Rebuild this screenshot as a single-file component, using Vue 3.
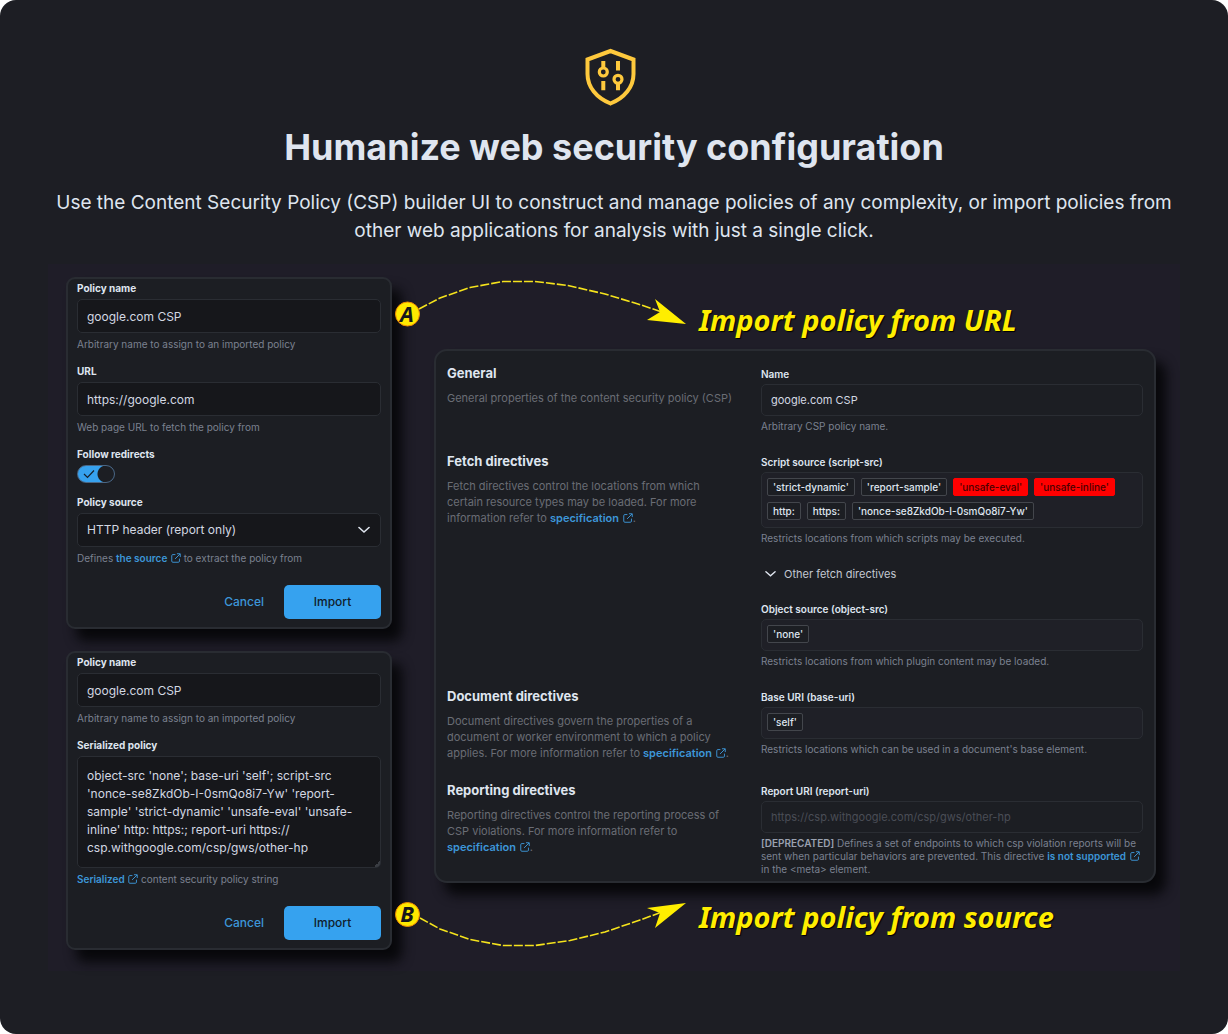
<script setup>
import { ref, h } from 'vue'

const importName = ref('google.com CSP')
const importUrl = ref('https://google.com')
const followRedirects = ref(true)
const sourceName = ref('google.com CSP')
const serialized = ref(
  "object-src 'none'; base-uri 'self'; script-src 'nonce-se8ZkdOb-I-0smQo8i7-Yw' 'report-sample' 'strict-dynamic' 'unsafe-eval' 'unsafe-inline' http: https:; report-uri https://\u200bcsp.withgoogle.com/csp/gws/other-hp"
)
const policyName = ref('google.com CSP')
const scriptSources = [
  { text: "'strict-dynamic'" },
  { text: "'report-sample'" },
  { text: "'unsafe-eval'", danger: true },
  { text: "'unsafe-inline'", danger: true },
  { text: 'http:' },
  { text: 'https:' },
  { text: "'nonce-se8ZkdOb-I-0smQo8i7-Yw'" }
]

const ExternalIcon = () =>
  h('svg', { viewBox: '0 0 16 16', width: 10, height: 10, fill: 'none', stroke: 'currentColor', 'stroke-width': 1.5, 'aria-hidden': 'true' }, [
    h('path', { d: 'M7 2.5H3A1.8 1.8 0 0 0 1.2 4.300V13A1.800 1.800 0 0 0 3 14.800h8.700A1.800 1.800 0 0 0 13.500 13V9M9.500 1.200h5.300v5.300M14.500 1.500 6.500 9.500' })
  ])
</script>

<template>
  <main class="hero">
    <svg class="logo" viewBox="0 0 58 58" aria-hidden="true">
      <g fill="none" stroke="#fec93d" stroke-width="4">
        <path d="M25.500 3 48.500 11.500V26C48.500 39 39.500 50 25.500 55.500 11.500 50 2.500 39 2.500 26V11.500Z" />
        <circle cx="18.300" cy="24" r="4" stroke-width="3.200" />
        <circle cx="33" cy="31.300" r="4" stroke-width="3.200" />
        <path d="M18.300 13v6.500M18.300 33v9.300M33 13v9.600M33 36v6.300" />
      </g>
    </svg>
    <h1>Humanize web security configuration</h1>
    <p class="lead">
      Use the Content Security Policy (CSP) builder UI to construct and manage policies of any complexity, or import policies from other web applications for analysis with just a single click.
    </p>

    <section class="stage">
      <div class="imports">
        <form class="panel" @submit.prevent>
          <div class="field">
            <label for="import-name">Policy name</label>
            <input id="import-name" v-model="importName" class="control" type="text" />
            <p class="help">Arbitrary name to assign to an imported policy</p>
          </div>
          <div class="field">
            <label for="import-url">URL</label>
            <input id="import-url" v-model="importUrl" class="control" type="text" />
            <p class="help">Web page URL to fetch the policy from</p>
          </div>
          <div class="field">
            <label for="import-follow">Follow redirects</label>
            <div class="switch">
              <input id="import-follow" v-model="followRedirects" type="checkbox" />
              <svg viewBox="0 0 12 10" aria-hidden="true"><path d="m1 5 3.500 3.500L11 1.500" fill="none" stroke="#16202c" stroke-width="1.200" /></svg>
            </div>
          </div>
          <div class="field">
            <label for="import-source">Policy source</label>
            <div class="select">
              <select id="import-source" class="control">
                <option>HTTP header (report only)</option>
              </select>
              <svg viewBox="0 0 12 8" aria-hidden="true"><path d="m1 1.500 5 4.500 5-4.500" fill="none" stroke="#dfe5ef" stroke-width="1.600" stroke-linecap="round" /></svg>
            </div>
            <p class="help">Defines <a href="#source">the source <ExternalIcon /></a> to extract the policy from</p>
          </div>
          <div class="actions">
            <button type="button" class="cancel">Cancel</button>
            <button type="submit" class="import">Import</button>
          </div>
        </form>

        <form class="panel" @submit.prevent>
          <div class="field">
            <label for="source-name">Policy name</label>
            <input id="source-name" v-model="sourceName" class="control" type="text" />
            <p class="help">Arbitrary name to assign to an imported policy</p>
          </div>
          <div class="field">
            <label for="source-policy">Serialized policy</label>
            <textarea id="source-policy" v-model="serialized" class="control" rows="5" spellcheck="false"></textarea>
            <p class="help"><a href="#serialized">Serialized <ExternalIcon /></a> content security policy string</p>
          </div>
          <div class="actions">
            <button type="button" class="cancel">Cancel</button>
            <button type="submit" class="import">Import</button>
          </div>
        </form>
      </div>

      <div class="result">
        <div class="callout top">
          <svg class="arrow" viewBox="395 264 292 85" aria-hidden="true">
            <circle cx="407.500" cy="314" r="12" fill="#ffe900" stroke="#f08a00" stroke-width="1" />
            <text x="407" y="322" class="letter">A</text>
            <path d="M419 309 440 298 470 287.500 503 281.500H535L568 285.500 605 294 638 304 662 312" class="dash" />
            <path d="m686 324-31-25 5 13-13 8Z" fill="#ffee00" />
          </svg>
          <span>Import policy from URL</span>
        </div>

        <form class="policy" @submit.prevent>
          <section class="group">
            <div>
              <h2>General</h2>
              <p class="about">General properties of the content security policy (CSP)</p>
            </div>
            <div class="fields">
              <div class="field">
                <label for="policy-name">Name</label>
                <input id="policy-name" v-model="policyName" class="control" type="text" />
                <p class="help">Arbitrary CSP policy name.</p>
              </div>
            </div>
          </section>

          <section class="group">
            <div>
              <h2>Fetch directives</h2>
              <p class="about">
                Fetch directives control the locations from which certain resource types may be loaded. For more information refer to
                <a href="#fetch">specification <ExternalIcon /></a>.
              </p>
            </div>
            <div class="fields">
              <div class="field" role="group" aria-labelledby="script-label">
                <span id="script-label" class="label">Script source (script-src)</span>
                <div class="chips">
                  <span v-for="s in scriptSources" :key="s.text" class="chip" :class="{ danger: s.danger }">{{ s.text }}</span>
                </div>
                <p class="help">Restricts locations from which scripts may be executed.</p>
              </div>
              <button type="button" class="accordion" aria-expanded="true">
                <svg viewBox="0 0 12 8" aria-hidden="true"><path d="m1 1.500 5 4.500 5-4.500" fill="none" stroke="#dfe5ef" stroke-width="1.500" stroke-linecap="round" /></svg>
                Other fetch directives
              </button>
              <div class="field" role="group" aria-labelledby="object-label">
                <span id="object-label" class="label">Object source (object-src)</span>
                <div class="chips"><span class="chip">'none'</span></div>
                <p class="help">Restricts locations from which plugin content may be loaded.</p>
              </div>
            </div>
          </section>

          <section class="group">
            <div>
              <h2>Document directives</h2>
              <p class="about">
                Document directives govern the properties of a document or worker environment to which a policy applies. For more information refer to
                <a href="#document">specification <ExternalIcon /></a>.
              </p>
            </div>
            <div class="fields">
              <div class="field" role="group" aria-labelledby="base-label">
                <span id="base-label" class="label">Base URI (base-uri)</span>
                <div class="chips"><span class="chip">'self'</span></div>
                <p class="help">Restricts locations which can be used in a document's base element.</p>
              </div>
            </div>
          </section>

          <section class="group">
            <div>
              <h2>Reporting directives</h2>
              <p class="about">
                Reporting directives control the reporting process of CSP violations. For more information refer to
                <a href="#reporting">specification <ExternalIcon /></a>.
              </p>
            </div>
            <div class="fields">
              <div class="field">
                <label for="report-uri">Report URI (report-uri)</label>
                <input id="report-uri" class="control" type="text" placeholder="https://csp.withgoogle.com/csp/gws/other-hp" />
                <p class="help">
                  <strong>[DEPRECATED]</strong> Defines a set of endpoints to which csp violation reports will be sent when particular behaviors are prevented. This directive
                  <a href="#support">is not supported <ExternalIcon /></a> in the &lt;meta&gt; element.
                </p>
              </div>
            </div>
          </section>
        </form>

        <div class="callout bottom">
          <svg class="arrow" viewBox="395 883 292 85" aria-hidden="true">
            <circle cx="407.500" cy="914.500" r="12" fill="#ffe900" stroke="#f08a00" stroke-width="1" />
            <text x="407" y="922" class="letter">B</text>
            <path d="M420 918 440 929 470 939.500 503 945.500H535L570 940.500 605 932 640 920 662 912" class="dash" />
            <path d="m686 903-39 5 13 5-5 15Z" fill="#ffee00" />
          </svg>
          <span>Import policy from source</span>
        </div>
      </div>
    </section>
  </main>
</template>

<style>
body {
  margin: 0;
  background: #fff;
}
</style>

<style scoped>
* {
  box-sizing: border-box;
}
.hero {
  display: flex;
  flex-direction: column;
  align-items: center;
  min-height: 100vh;
  padding: 48px 48px 62px;
  border-radius: 16px;
  background: #1d1e24;
  color: #dfe5ef;
  font-family: Inter, sans-serif;
}
.logo {
  width: 58px;
  height: 58px;
}
h1 {
  margin: 18px 0 0;
  font-size: 36px;
  line-height: 46px;
  font-weight: 700;
  text-align: center;
}
.lead {
  margin: 19px 0 0;
  font-size: 19px;
  line-height: 28px;
  text-align: center;
}
.stage {
  display: flex;
  gap: 42px;
  width: 100%;
  margin-top: 19px;
  padding: 0 24px 0 18px;
  background: #1f1d28;
}
.imports {
  display: flex;
  flex-direction: column;
  flex: 0 0 326px;
  gap: 22px;
  padding: 13px 0 21px;
}
.panel,
.policy {
  border: 2px solid #292c32;
  background: #1c1e23;
  box-shadow: 10px 12px 12px #08080b;
}
.panel {
  display: flex;
  flex-direction: column;
  gap: 13px;
  padding: 2px 9px 8px;
  border-radius: 9px;
}
.field {
  display: flex;
  flex-direction: column;
  gap: 4px;
}
label,
.label {
  font-size: 10px;
  line-height: 14px;
  font-weight: 700;
}
.control {
  display: block;
  width: 100%;
  height: 34px;
  margin: 0;
  padding: 0 9px;
  border: 1px solid #2a2d33;
  border-radius: 5px;
  background: #16171b;
  color: #d3d8e2;
  font: 400 12px/18px Inter, sans-serif;
  outline: 0;
}
textarea.control {
  height: 112px;
  padding: 10px 9px;
  overflow: hidden;
  resize: none;
  background: linear-gradient(135deg, transparent 50%, #3a3d43 50%) right bottom / 6px 6px no-repeat #16171b;
}
.help {
  margin: 0;
  color: #7b8190;
  font-size: 10px;
  line-height: 14px;
}
.help strong {
  color: #9aa1b0;
  font-weight: 600;
}
a {
  color: #3d96d8;
  font-weight: 600;
  text-decoration: none;
}
a svg {
  margin-left: 1px;
  vertical-align: -1px;
}
.switch {
  position: relative;
  height: 17px;
}
.switch input {
  display: block;
  width: 38px;
  height: 18px;
  margin: 0;
  appearance: none;
  border: 1px solid #4a6786;
  border-radius: 9px;
  background: #1c1e23;
}
.switch input:checked {
  background: radial-gradient(circle at 28px 8px, #1c1e23 8px, #36a2ef 9px);
}
.switch svg {
  position: absolute;
  top: 4px;
  left: 6px;
  width: 12px;
  height: 10px;
}
.select {
  position: relative;
}
.select select {
  appearance: none;
}
.select svg {
  position: absolute;
  top: 13px;
  right: 11px;
  width: 12px;
  height: 8px;
}
.actions {
  display: flex;
  justify-content: flex-end;
  gap: 20px;
  margin-top: 7px;
}
.actions button {
  height: 34px;
  padding: 0;
  border: 0;
  border-radius: 5px;
  background: none;
  font: 500 12px/18px Inter, sans-serif;
}
.actions .cancel {
  color: #3d96d8;
}
.actions .import {
  width: 97px;
  background: #36a2ef;
  color: #101c2b;
}
.result {
  flex: 1;
  min-width: 0;
}
.callout {
  position: relative;
  display: flex;
  padding-left: 265px;
  color: #ffee00;
  font: italic 700 29px/40px "Noto Sans", sans-serif;
  text-shadow: 1px 1px 1px #000;
  white-space: nowrap;
}
.top {
  height: 85px;
  padding-top: 36px;
}
.bottom {
  padding-top: 14px;
}
.arrow {
  position: absolute;
  top: 0;
  left: -39px;
  width: 292px;
  height: 85px;
}
.letter {
  fill: #16171b;
  font: italic 700 22px "Noto Sans", sans-serif;
  text-anchor: middle;
  text-shadow: none;
}
.dash {
  fill: none;
  stroke: #f5e31c;
  stroke-width: 1.600;
  stroke-dasharray: 9 2;
}
.policy {
  display: flex;
  flex-direction: column;
  gap: 19px;
  padding: 13px 11px 5px;
  border-radius: 13px;
}
.group {
  display: grid;
  grid-template-columns: 296fr 382fr;
  gap: 18px;
}
h2 {
  margin: 0 0 8px;
  font-size: 13px;
  line-height: 18px;
  font-weight: 700;
}
.about {
  margin: 0;
  padding: 0 7px 1px 0;
  color: #6a6d75;
  font-size: 11px;
  line-height: 16px;
}
.fields {
  display: flex;
  flex-direction: column;
  gap: 20px;
  padding-top: 4px;
}
.policy label,
.policy .label {
  line-height: 12px;
  font-weight: 600;
}
.policy .help {
  line-height: 13px;
}
.policy .control {
  height: 32px;
  background: #1c1e23;
  font-size: 11px;
}
.policy .control::placeholder {
  color: #4a4d56;
  opacity: 1;
}
.chips {
  display: flex;
  flex-wrap: wrap;
  gap: 6px;
  padding: 5px 5px 7px;
  border: 1px solid #2a2d33;
  border-radius: 5px;
  background: #1f2027;
}
.chip {
  padding: 0 5px;
  border: 1px solid #43464c;
  border-radius: 2px;
  background: #1c1e23;
  font-size: 10px;
  line-height: 16px;
  font-weight: 500;
}
.chip.danger {
  border-color: #f00;
  background: #f00;
  color: #4a0000;
}
.accordion {
  display: flex;
  align-items: center;
  gap: 8px;
  padding: 0 4px;
  border: 0;
  background: none;
  color: #c3c8d2;
  font: 400 11px/18px Inter, sans-serif;
}
.accordion svg {
  width: 11px;
  height: 8px;
}
</style>
